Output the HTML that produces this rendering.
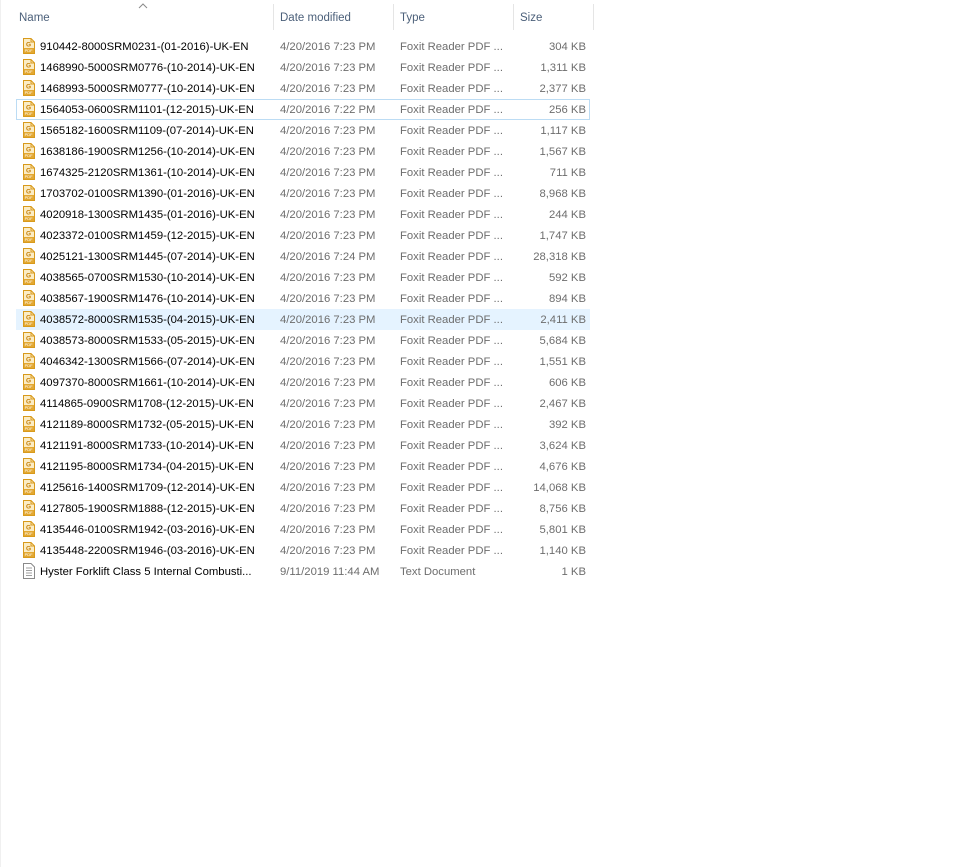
<!DOCTYPE html>
<html><head><meta charset="utf-8"><style>
body{margin:0;width:953px;height:867px;background:#fff;font-family:"Liberation Sans",sans-serif;font-size:11.3px;position:relative;overflow:hidden}
.l{position:absolute;left:0;top:0;width:1px;height:867px;background:#f0f0f0}
.h{position:absolute;top:12px;font-size:11.5px;color:#4c607a}
.sep{position:absolute;top:4px;width:1px;height:26px;background:#e5e5e5}
.row{position:absolute;left:16px;width:574px;height:21px}
.row span{position:absolute;top:5px;white-space:nowrap}
.n{left:24px;color:#000}
.d{left:264px;color:#6d6d6d}
.t{left:384px;color:#6d6d6d}
.s{right:4px;color:#6d6d6d}
.ic{position:absolute;left:6px;top:2px}
.foc{outline:1px solid #bcdcf4;outline-offset:-1px}
.hov{background:#e5f3ff}
</style></head><body>
<div class="l"></div>
<svg style="position:absolute;left:138px;top:3px" width="10" height="6"><path d="M1 5 L5 1 L9 5" stroke="#8a8a8a" fill="none"/></svg>
<div class="h" style="left:19px">Name</div>
<div class="sep" style="left:273px"></div>
<div class="h" style="left:280px">Date modified</div>
<div class="sep" style="left:393px"></div>
<div class="h" style="left:400px">Type</div>
<div class="sep" style="left:513px"></div>
<div class="h" style="left:520px">Size</div>
<div class="sep" style="left:593px"></div>
<svg width="0" height="0" style="position:absolute"><defs>
<g id="pdf"><path d="M1.5 0.5 H9 L12.5 4 V15.5 H1.5 Z" fill="#fbecc4" stroke="#d89a1c"/><path d="M9 0.5 V4 H12.5" fill="none" stroke="#d89a1c"/><text x="4" y="8.5" font-size="6.5" fill="#c57f08" font-family="Liberation Sans" font-weight="bold">G</text><rect x="2" y="10" width="10" height="5" fill="#e3a832"/><text x="2.6" y="14.2" font-size="4" fill="#fff" font-family="Liberation Sans">PDF</text></g>
<g id="txt"><path d="M1.5 0.5 H9 L12.5 4 V15.5 H1.5 Z" fill="#fff" stroke="#8a8a8a"/><path d="M4 5H10M4 7.5H10M4 10H10M4 12.5H10" stroke="#a0a0a0"/></g>
</defs></svg>
<div id="rows"></div>
<script>
var d=[["910442-8000SRM0231-(01-2016)-UK-EN","4/20/2016 7:23 PM","304 KB"],
["1468990-5000SRM0776-(10-2014)-UK-EN","4/20/2016 7:23 PM","1,311 KB"],
["1468993-5000SRM0777-(10-2014)-UK-EN","4/20/2016 7:23 PM","2,377 KB"],
["1564053-0600SRM1101-(12-2015)-UK-EN","4/20/2016 7:22 PM","256 KB"],
["1565182-1600SRM1109-(07-2014)-UK-EN","4/20/2016 7:23 PM","1,117 KB"],
["1638186-1900SRM1256-(10-2014)-UK-EN","4/20/2016 7:23 PM","1,567 KB"],
["1674325-2120SRM1361-(10-2014)-UK-EN","4/20/2016 7:23 PM","711 KB"],
["1703702-0100SRM1390-(01-2016)-UK-EN","4/20/2016 7:23 PM","8,968 KB"],
["4020918-1300SRM1435-(01-2016)-UK-EN","4/20/2016 7:23 PM","244 KB"],
["4023372-0100SRM1459-(12-2015)-UK-EN","4/20/2016 7:23 PM","1,747 KB"],
["4025121-1300SRM1445-(07-2014)-UK-EN","4/20/2016 7:24 PM","28,318 KB"],
["4038565-0700SRM1530-(10-2014)-UK-EN","4/20/2016 7:23 PM","592 KB"],
["4038567-1900SRM1476-(10-2014)-UK-EN","4/20/2016 7:23 PM","894 KB"],
["4038572-8000SRM1535-(04-2015)-UK-EN","4/20/2016 7:23 PM","2,411 KB"],
["4038573-8000SRM1533-(05-2015)-UK-EN","4/20/2016 7:23 PM","5,684 KB"],
["4046342-1300SRM1566-(07-2014)-UK-EN","4/20/2016 7:23 PM","1,551 KB"],
["4097370-8000SRM1661-(10-2014)-UK-EN","4/20/2016 7:23 PM","606 KB"],
["4114865-0900SRM1708-(12-2015)-UK-EN","4/20/2016 7:23 PM","2,467 KB"],
["4121189-8000SRM1732-(05-2015)-UK-EN","4/20/2016 7:23 PM","392 KB"],
["4121191-8000SRM1733-(10-2014)-UK-EN","4/20/2016 7:23 PM","3,624 KB"],
["4121195-8000SRM1734-(04-2015)-UK-EN","4/20/2016 7:23 PM","4,676 KB"],
["4125616-1400SRM1709-(12-2014)-UK-EN","4/20/2016 7:23 PM","14,068 KB"],
["4127805-1900SRM1888-(12-2015)-UK-EN","4/20/2016 7:23 PM","8,756 KB"],
["4135446-0100SRM1942-(03-2016)-UK-EN","4/20/2016 7:23 PM","5,801 KB"],
["4135448-2200SRM1946-(03-2016)-UK-EN","4/20/2016 7:23 PM","1,140 KB"],
["Hyster Forklift Class 5 Internal Combusti...","9/11/2019 11:44 AM","1 KB"]];
var h="";
d.forEach(function(r,i){var last=i==d.length-1;
var c=i==3?" foc":(i==13?" hov":"");
h+='<div class="row'+c+'" style="top:'+(36+i*21)+'px"><svg class="ic" width="14" height="16"><use href="#'+(last?'txt':'pdf')+'"/></svg><span class="n">'+r[0]+'</span><span class="d">'+r[1]+'</span><span class="t">'+(last?'Text Document':'Foxit Reader PDF ...')+'</span><span class="s">'+r[2]+'</span></div>';});
document.getElementById("rows").innerHTML=h;
</script>
</body></html>
